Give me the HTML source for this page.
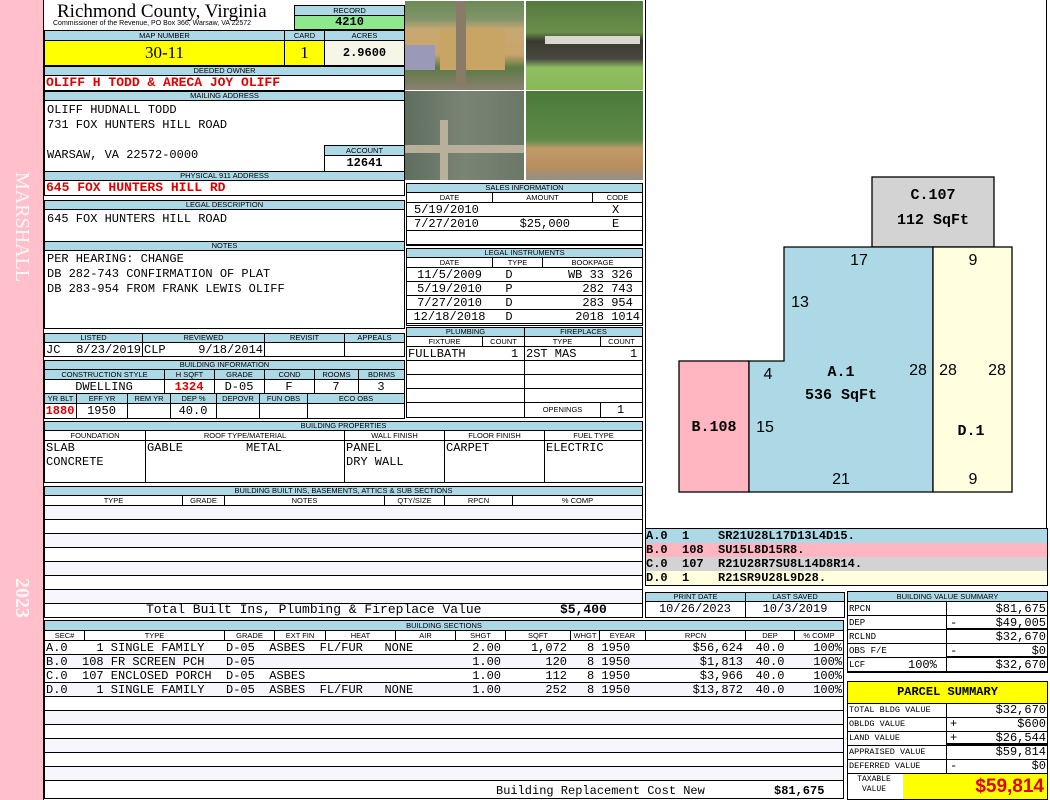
<!DOCTYPE html>
<html><head><meta charset="utf-8">
<style>
*{margin:0;padding:0;box-sizing:border-box}
body{width:1050px;height:800px;position:relative;background:#fff;overflow:hidden;font-family:"Liberation Mono",monospace;color:#000}
.a{position:absolute}
.h{position:absolute;background:#add8e6;border:1px solid #000;font:7.5px/8px "Liberation Sans",sans-serif;text-align:center;white-space:nowrap;overflow:hidden}
.bx{position:absolute;border:1px solid #000;background:#fff}
.t{position:absolute;font:12px/14px "Liberation Mono",monospace;white-space:pre}
.r{text-align:right}
.c{text-align:center}
.red{color:#e00000;font-weight:bold}
.vl{position:absolute;width:1px;background:#000}
.hl{position:absolute;height:1px;background:#000}
.rows{background:repeating-linear-gradient(#f6f6fc 0 13px,#000 13px 14px,#fff 14px 27px,#000 27px 28px)}
</style></head><body>
<!-- left strip -->
<div class="a" style="left:0;top:0;width:43px;height:800px;background:#ffc0cb"></div>
<div class="a" style="left:8px;top:172px;width:28px;height:160px;writing-mode:vertical-rl;font:20px/28px 'Liberation Serif',serif;color:#fff5f7">MARSHALL</div>
<div class="a" style="left:8px;top:578px;width:28px;height:60px;writing-mode:vertical-rl;font:bold 20px/28px 'Liberation Serif',serif;color:#fff5f7">2023</div>
<div class="vl" style="left:43px;top:0;height:800px"></div>

<!-- header -->
<div class="a" style="left:57px;top:1px;font:19px/21px 'Liberation Serif',serif">Richmond County, Virginia</div>
<div class="a" style="left:53px;top:20px;font:7px/8px 'Liberation Sans',sans-serif">Commissioner of the Revenue, PO Box 366, Warsaw, VA 22572</div>
<div class="h" style="left:294px;top:5px;width:111px;height:11px;line-height:9px">RECORD</div>
<div class="a" style="left:294px;top:15px;width:111px;height:15px;background:#8ee88e;border:1px solid #000;font:bold 12px/13px 'Liberation Mono';text-align:center">4210</div>
<div class="h" style="left:44px;top:30px;width:241px;height:11px;line-height:9px">MAP NUMBER</div>
<div class="h" style="left:284px;top:30px;width:41px;height:11px;line-height:9px">CARD</div>
<div class="h" style="left:324px;top:30px;width:81px;height:11px;line-height:9px">ACRES</div>
<div class="a" style="left:44px;top:40px;width:241px;height:26px;background:#ffff00;border:1px solid #000;font:17px/24px 'Liberation Serif',serif;text-align:center">30-11</div>
<div class="a" style="left:284px;top:40px;width:41px;height:26px;background:#ffff00;border:1px solid #000;font:17px/24px 'Liberation Serif',serif;text-align:center">1</div>
<div class="a" style="left:324px;top:40px;width:81px;height:26px;background:#f6f6e8;border:1px solid #000;font:bold 12px/24px 'Liberation Mono';text-align:center">2.9600</div>
<div class="h" style="left:44px;top:66px;width:361px;height:10px">DEEDED OWNER</div>
<div class="bx" style="left:44px;top:75px;width:361px;height:16px"></div>
<div class="t red" style="left:46px;top:76px;font-size:13px">OLIFF H TODD &amp; ARECA JOY OLIFF</div>
<div class="h" style="left:44px;top:91px;width:361px;height:10px">MAILING ADDRESS</div>
<div class="bx" style="left:44px;top:100px;width:361px;height:72px"></div>
<div class="t" style="left:47px;top:103px;line-height:15px">OLIFF HUDNALL TODD
731 FOX HUNTERS HILL ROAD

WARSAW, VA 22572-0000</div>
<div class="h" style="left:324px;top:145px;width:81px;height:11px;line-height:9px">ACCOUNT</div>
<div class="bx" style="left:324px;top:155px;width:81px;height:17px"></div>
<div class="t" style="left:324px;top:156px;width:81px;font-weight:bold;text-align:center">12641</div>
<div class="h" style="left:44px;top:171px;width:361px;height:10px">PHYSICAL 911 ADDRESS</div>
<div class="bx" style="left:44px;top:180px;width:361px;height:16px"></div>
<div class="t red" style="left:46px;top:181px;font-size:13px">645 FOX HUNTERS HILL RD</div>

<div class="h" style="left:44px;top:200px;width:361px;height:10px">LEGAL DESCRIPTION</div>
<div class="bx" style="left:44px;top:209px;width:361px;height:33px"></div>
<div class="t" style="left:47px;top:212px">645 FOX HUNTERS HILL ROAD</div>
<div class="h" style="left:44px;top:241px;width:361px;height:10px">NOTES</div>
<div class="bx" style="left:44px;top:250px;width:361px;height:79px"></div>
<div class="t" style="left:47px;top:252px;line-height:15px">PER HEARING: CHANGE
DB 282-743 CONFIRMATION OF PLAT
DB 283-954 FROM FRANK LEWIS OLIFF</div>

<!-- listed -->
<div class="h" style="left:44px;top:333px;width:99px;height:10px">LISTED</div>
<div class="h" style="left:142px;top:333px;width:123px;height:10px">REVIEWED</div>
<div class="h" style="left:264px;top:333px;width:81px;height:10px">REVISIT</div>
<div class="h" style="left:344px;top:333px;width:61px;height:10px">APPEALS</div>
<div class="bx" style="left:44px;top:342px;width:361px;height:15px"></div>
<div class="vl" style="left:142px;top:342px;height:15px"></div><div class="vl" style="left:264px;top:342px;height:15px"></div><div class="vl" style="left:344px;top:342px;height:15px"></div>
<div class="t" style="left:46px;top:343px">JC</div>
<div class="t r" style="left:60px;top:343px;width:81px">8/23/2019</div>
<div class="t" style="left:144px;top:343px">CLP</div>
<div class="t r" style="left:180px;top:343px;width:83px">9/18/2014</div>

<!-- building information -->
<div class="h" style="left:44px;top:360px;width:361px;height:10px">BUILDING INFORMATION</div>
<div class="bx" style="left:44px;top:369px;width:361px;height:50px"></div>
<div class="h" style="left:44px;top:369px;width:121px;height:11px;line-height:9px">CONSTRUCTION STYLE</div>
<div class="h" style="left:164px;top:369px;width:51px;height:11px;line-height:9px">H SQFT</div>
<div class="h" style="left:214px;top:369px;width:51px;height:11px;line-height:9px">GRADE</div>
<div class="h" style="left:264px;top:369px;width:51px;height:11px;line-height:9px">COND</div>
<div class="h" style="left:314px;top:369px;width:45px;height:11px;line-height:9px">ROOMS</div>
<div class="h" style="left:358px;top:369px;width:47px;height:11px;line-height:9px">BDRMS</div>
<div class="vl" style="left:164px;top:380px;height:14px"></div><div class="vl" style="left:214px;top:380px;height:14px"></div><div class="vl" style="left:264px;top:380px;height:14px"></div><div class="vl" style="left:314px;top:380px;height:14px"></div><div class="vl" style="left:358px;top:380px;height:14px"></div>
<div class="t c" style="left:44px;top:380px;width:120px">DWELLING</div>
<div class="t c red" style="left:164px;top:380px;width:50px">1324</div>
<div class="t c" style="left:214px;top:380px;width:50px">D-05</div>
<div class="t c" style="left:264px;top:380px;width:50px">F</div>
<div class="t c" style="left:314px;top:380px;width:44px">7</div>
<div class="t c" style="left:358px;top:380px;width:46px">3</div>
<div class="h" style="left:44px;top:393px;width:33px;height:11px;line-height:9px">YR BLT</div>
<div class="h" style="left:76px;top:393px;width:52px;height:11px;line-height:9px">EFF YR</div>
<div class="h" style="left:127px;top:393px;width:44px;height:11px;line-height:9px">REM YR</div>
<div class="h" style="left:170px;top:393px;width:47px;height:11px;line-height:9px">DEP %</div>
<div class="h" style="left:216px;top:393px;width:44px;height:11px;line-height:9px">DEPOVR</div>
<div class="h" style="left:259px;top:393px;width:49px;height:11px;line-height:9px">FUN OBS</div>
<div class="h" style="left:307px;top:393px;width:98px;height:11px;line-height:9px">ECO OBS</div>
<div class="vl" style="left:76px;top:404px;height:14px"></div><div class="vl" style="left:127px;top:404px;height:14px"></div><div class="vl" style="left:170px;top:404px;height:14px"></div><div class="vl" style="left:216px;top:404px;height:14px"></div><div class="vl" style="left:259px;top:404px;height:14px"></div><div class="vl" style="left:307px;top:404px;height:14px"></div>
<div class="t c red" style="left:44px;top:404px;width:32px">1880</div>
<div class="t c" style="left:76px;top:404px;width:51px">1950</div>
<div class="t c" style="left:170px;top:404px;width:46px">40.0</div>

<!-- photos -->
<div class="a" style="left:405px;top:1px;width:119px;height:89px;background:linear-gradient(180deg,#6b8a55 0,#7f9468 20%,#c7a872 32%,#c9a46a 60%,#5d7a45 75%,#8a8070 100%)"></div>
<div class="a" style="left:440px;top:28px;width:65px;height:42px;background:#c8a465"></div>
<div class="a" style="left:405px;top:45px;width:30px;height:25px;background:#9a9ab8"></div>
<div class="a" style="left:456px;top:1px;width:10px;height:85px;background:#8a7a68"></div>
<div class="a" style="left:526px;top:1px;width:117px;height:89px;background:linear-gradient(180deg,#557a40 0,#6a8f4a 35%,#3a3a30 45%,#484840 65%,#8fbf60 75%,#88b858 100%)"></div>
<div class="a" style="left:545px;top:36px;width:95px;height:8px;background:#d8d8d0"></div>
<div class="a" style="left:405px;top:91px;width:119px;height:89px;background:linear-gradient(90deg,#5e6e5e,#7a8474 50%,#6a7868)"></div>
<div class="a" style="left:405px;top:145px;width:119px;height:8px;background:#b8b09a"></div>
<div class="a" style="left:440px;top:120px;width:8px;height:60px;background:#b8b09a"></div>
<div class="a" style="left:526px;top:91px;width:117px;height:89px;background:linear-gradient(180deg,#4a7a3a 0,#5e8a48 55%,#c09a6a 65%,#b88e60 85%,#909088 100%)"></div>

<!-- sales -->
<div class="h" style="left:406px;top:183px;width:237px;height:10px">SALES INFORMATION</div>
<div class="bx" style="left:406px;top:192px;width:237px;height:54px"></div>
<div class="h" style="left:406px;top:192px;width:87px;height:11px;line-height:9px;background:#fff">DATE</div>
<div class="h" style="left:492px;top:192px;width:101px;height:11px;line-height:9px;background:#fff">AMOUNT</div>
<div class="h" style="left:592px;top:192px;width:51px;height:11px;line-height:9px;background:#fff">CODE</div>
<div class="a" style="left:407px;top:203px;width:235px;height:42px;background:repeating-linear-gradient(#fff 0 13px,#000 13px 14px)"></div>
<div class="t" style="left:414px;top:203px">5/19/2010</div><div class="t" style="left:612px;top:203px">X</div>
<div class="t" style="left:414px;top:217px">7/27/2010</div><div class="t r" style="left:492px;top:217px;width:78px">$25,000</div><div class="t" style="left:612px;top:217px">E</div>

<div class="h" style="left:406px;top:248px;width:237px;height:10px">LEGAL INSTRUMENTS</div>
<div class="bx" style="left:406px;top:257px;width:237px;height:69px"></div>
<div class="h" style="left:406px;top:257px;width:87px;height:11px;line-height:9px;background:#fff">DATE</div>
<div class="h" style="left:492px;top:257px;width:51px;height:11px;line-height:9px;background:#fff">TYPE</div>
<div class="h" style="left:542px;top:257px;width:101px;height:11px;line-height:9px;background:#fff">BOOKPAGE</div>
<div class="a" style="left:407px;top:268px;width:235px;height:57px;background:repeating-linear-gradient(#fff 0 13px,#000 13px 14px)"></div>
<div class="t c" style="left:406px;top:268px;width:87px;line-height:14px">11/5/2009
5/19/2010
7/27/2010
12/18/2018</div>
<div class="t c" style="left:492px;top:268px;width:34px;line-height:14px">D
P
D
D</div>
<div class="t r" style="left:530px;top:268px;width:110px;line-height:14px">WB 33 326 
282 743 
283 954 
2018 1014</div>

<!-- plumbing -->
<div class="h" style="left:406px;top:327px;width:119px;height:10px">PLUMBING</div>
<div class="h" style="left:524px;top:327px;width:119px;height:10px">FIREPLACES</div>
<div class="bx" style="left:406px;top:336px;width:237px;height:82px"></div>
<div class="h" style="left:406px;top:336px;width:77px;height:11px;line-height:9px;background:#fff">FIXTURE</div>
<div class="h" style="left:482px;top:336px;width:43px;height:11px;line-height:9px;background:#fff">COUNT</div>
<div class="h" style="left:524px;top:336px;width:77px;height:11px;line-height:9px;background:#fff">TYPE</div>
<div class="h" style="left:600px;top:336px;width:43px;height:11px;line-height:9px;background:#fff">COUNT</div>
<div class="a" style="left:407px;top:347px;width:235px;height:56px;background:repeating-linear-gradient(#fff 0 13px,#000 13px 14px)"></div>
<div class="vl" style="left:524px;top:347px;height:71px"></div>
<div class="t" style="left:408px;top:347px">FULLBATH</div><div class="t" style="left:511px;top:347px">1</div>
<div class="t" style="left:526px;top:347px">2ST MAS</div><div class="t" style="left:630px;top:347px">1</div>
<div class="a" style="left:525px;top:403px;width:117px;height:14px;background:#fff"></div>
<div class="vl" style="left:600px;top:403px;height:15px"></div>
<div class="a" style="left:525px;top:405px;width:75px;font:7.5px/10px 'Liberation Sans';text-align:center">OPENINGS</div>
<div class="t" style="left:617px;top:403px">1</div>

<!-- building properties -->
<div class="h" style="left:44px;top:421px;width:599px;height:10px">BUILDING PROPERTIES</div>
<div class="bx" style="left:44px;top:430px;width:599px;height:53px"></div>
<div class="h" style="left:44px;top:430px;width:102px;height:11px;line-height:9px;background:#fff">FOUNDATION</div>
<div class="h" style="left:145px;top:430px;width:200px;height:11px;line-height:9px;background:#fff">ROOF TYPE/MATERIAL</div>
<div class="h" style="left:344px;top:430px;width:101px;height:11px;line-height:9px;background:#fff">WALL FINISH</div>
<div class="h" style="left:444px;top:430px;width:101px;height:11px;line-height:9px;background:#fff">FLOOR FINISH</div>
<div class="h" style="left:544px;top:430px;width:99px;height:11px;line-height:9px;background:#fff">FUEL TYPE</div>
<div class="vl" style="left:145px;top:441px;height:42px"></div><div class="vl" style="left:344px;top:441px;height:42px"></div><div class="vl" style="left:444px;top:441px;height:42px"></div><div class="vl" style="left:544px;top:441px;height:42px"></div>
<div class="t" style="left:46px;top:441px">SLAB
CONCRETE</div>
<div class="t" style="left:147px;top:441px">GABLE</div><div class="t" style="left:246px;top:441px">METAL</div>
<div class="t" style="left:346px;top:441px">PANEL
DRY WALL</div>
<div class="t" style="left:446px;top:441px">CARPET</div>
<div class="t" style="left:546px;top:441px">ELECTRIC</div>

<!-- built ins -->
<div class="h" style="left:44px;top:486px;width:599px;height:10px">BUILDING BUILT INS, BASEMENTS, ATTICS &amp; SUB SECTIONS</div>
<div class="bx" style="left:44px;top:495px;width:599px;height:123px"></div>
<div class="h" style="left:44px;top:495px;width:139px;height:11px;line-height:9px;background:#fff">TYPE</div>
<div class="h" style="left:182px;top:495px;width:43px;height:11px;line-height:9px;background:#fff">GRADE</div>
<div class="h" style="left:224px;top:495px;width:161px;height:11px;line-height:9px;background:#fff">NOTES</div>
<div class="h" style="left:384px;top:495px;width:61px;height:11px;line-height:9px;background:#fff">QTY/SIZE</div>
<div class="h" style="left:444px;top:495px;width:69px;height:11px;line-height:9px;background:#fff">RPCN</div>
<div class="h" style="left:512px;top:495px;width:131px;height:11px;line-height:9px;background:#fff">% COMP</div>
<div class="a rows" style="left:45px;top:506px;width:597px;height:98px"></div>
<div class="t" style="left:146px;top:603px;font-size:13px">Total Built Ins, Plumbing &amp; Fireplace Value</div>
<div class="t" style="left:560px;top:603px;font-weight:bold;font-size:13px">$5,400</div>

<!-- building sections -->
<div class="h" style="left:44px;top:620px;width:800px;height:11px;line-height:9px">BUILDING SECTIONS</div>
<div class="bx" style="left:44px;top:630px;width:800px;height:169px"></div>
<div class="h" style="left:44px;top:630px;width:41px;height:11px;line-height:9px;background:#fff">SEC#</div>
<div class="h" style="left:84px;top:630px;width:141px;height:11px;line-height:9px;background:#fff">TYPE</div>
<div class="h" style="left:224px;top:630px;width:51px;height:11px;line-height:9px;background:#fff">GRADE</div>
<div class="h" style="left:274px;top:630px;width:52px;height:11px;line-height:9px;background:#fff">EXT FIN</div>
<div class="h" style="left:325px;top:630px;width:71px;height:11px;line-height:9px;background:#fff">HEAT</div>
<div class="h" style="left:395px;top:630px;width:61px;height:11px;line-height:9px;background:#fff">AIR</div>
<div class="h" style="left:455px;top:630px;width:51px;height:11px;line-height:9px;background:#fff">SHGT</div>
<div class="h" style="left:505px;top:630px;width:66px;height:11px;line-height:9px;background:#fff">SQFT</div>
<div class="h" style="left:570px;top:630px;width:30px;height:11px;line-height:9px;background:#fff">WHGT</div>
<div class="h" style="left:599px;top:630px;width:47px;height:11px;line-height:9px;background:#fff">EYEAR</div>
<div class="h" style="left:645px;top:630px;width:101px;height:11px;line-height:9px;background:#fff">RPCN</div>
<div class="h" style="left:745px;top:630px;width:50px;height:11px;line-height:9px;background:#fff">DEP</div>
<div class="h" style="left:794px;top:630px;width:50px;height:11px;line-height:9px;background:#fff">% COMP</div>
<div class="a" style="left:45px;top:641px;width:798px;height:140px;background:repeating-linear-gradient(#fff 0 13px,#000 13px 14px,#f6f6fc 14px 27px,#000 27px 28px)"></div>
<div class="t" style="left:46px;top:641px;line-height:14px">A.0    1 SINGLE FAMILY   D-05  ASBES  FL/FUR   NONE
B.0  108 FR SCREEN PCH   D-05
C.0  107 ENCLOSED PORCH  D-05  ASBES
D.0    1 SINGLE FAMILY   D-05  ASBES  FL/FUR   NONE</div>
<div class="t r" style="left:455px;top:641px;width:46px;line-height:14px">2.00
1.00
1.00
1.00</div>
<div class="t r" style="left:505px;top:641px;width:62px;line-height:14px">1,072
120
112
252</div>
<div class="t" style="left:587px;top:641px;line-height:14px">8 1950
8 1950
8 1950
8 1950</div>
<div class="t r" style="left:645px;top:641px;width:98px;line-height:14px">$56,624
$1,813
$3,966
$13,872</div>
<div class="t c" style="left:745px;top:641px;width:50px;line-height:14px">40.0
40.0
40.0
40.0</div>
<div class="t r" style="left:794px;top:641px;width:48px;line-height:14px">100%
100%
100%
100%</div>
<div class="t" style="left:496px;top:784px;font-size:12px">Building Replacement Cost New</div>
<div class="t" style="left:774px;top:784px;font-weight:bold;font-size:12px">$81,675</div>

<!-- sketch area -->
<div class="a" style="left:645px;top:0;width:1px;height:528px;background:#000"></div>
<div class="a" style="left:1046px;top:0;width:1px;height:528px;background:#000"></div>
<svg class="a" style="left:0;top:0" width="1050" height="528">
<rect x="872" y="177" width="122" height="70" fill="#d3d3d3" stroke="#000" stroke-width="1.3"/>
<rect x="679" y="361" width="70" height="131" fill="#ffb6c1" stroke="#000" stroke-width="1.3"/>
<polygon points="784,247 933,247 933,492 749,492 749,361 784,361" fill="#add8e6" stroke="#000" stroke-width="1.3"/>
<rect x="933" y="247" width="79" height="245" fill="#ffffe0" stroke="#000" stroke-width="1.3"/>
<g font-family="Liberation Mono" font-weight="bold" font-size="15" text-anchor="middle">
<text x="933" y="199">C.107</text><text x="933" y="224">112 SqFt</text>
<text x="841" y="376">A.1</text><text x="841" y="399">536 SqFt</text>
<text x="714" y="431">B.108</text><text x="971" y="435">D.1</text>
</g>
<g font-family="Liberation Sans" font-size="16" text-anchor="middle">
<text x="859" y="265">17</text><text x="800" y="307">13</text><text x="768" y="379">4</text>
<text x="918" y="375">28</text><text x="948" y="375">28</text><text x="997" y="375">28</text>
<text x="973" y="265">9</text><text x="973" y="484">9</text><text x="841" y="484">21</text>
<text x="765" y="432">15</text>
</g>
</svg>
<div class="a" style="left:645px;top:528px;width:403px;height:58px;border:1px solid #000"></div>
<div class="a" style="left:646px;top:529px;width:401px;height:14px;background:#add8e6"></div>
<div class="a" style="left:646px;top:543px;width:401px;height:14px;background:#ffb6c1"></div>
<div class="a" style="left:646px;top:557px;width:401px;height:14px;background:#d3d3d3"></div>
<div class="a" style="left:646px;top:571px;width:401px;height:14px;background:#ffffe0"></div>
<div class="t" style="left:646px;top:529px;font-weight:bold;line-height:14px;font-size:12px">A.0  1    SR21U28L17D13L4D15.
B.0  108  SU15L8D15R8.
C.0  107  R21U28R7SU8L14D8R14.
D.0  1    R21SR9U28L9D28.</div>

<!-- print date -->
<div class="h" style="left:645px;top:592px;width:101px;height:10px">PRINT DATE</div>
<div class="h" style="left:745px;top:592px;width:100px;height:10px">LAST SAVED</div>
<div class="bx" style="left:645px;top:601px;width:200px;height:17px"></div>
<div class="vl" style="left:745px;top:601px;height:17px"></div>
<div class="t c" style="left:645px;top:602px;width:100px">10/26/2023</div>
<div class="t c" style="left:745px;top:602px;width:100px">10/3/2019</div>

<!-- building value summary -->
<div class="h" style="left:847px;top:591px;width:201px;height:11px;line-height:9px">BUILDING VALUE SUMMARY</div>
<div class="bx" style="left:847px;top:601px;width:201px;height:72px;background:repeating-linear-gradient(#fff 0 13px,#000 13px 14px)"></div>
<div class="vl" style="left:946px;top:601px;height:72px"></div>
<div class="a" style="left:946px;top:628px;width:102px;height:2px;background:#000"></div>
<div class="a" style="left:946px;top:656px;width:102px;height:2px;background:#000"></div>
<div class="a" style="left:849px;top:602px;font:9px/14px 'Liberation Mono';white-space:pre">RPCN
DEP
RCLND
OBS F/E
LCF</div>
<div class="t" style="left:908px;top:658px">100%</div>
<div class="t r" style="left:947px;top:602px;width:99px;line-height:14px">$81,675
$49,005
$32,670
$0
$32,670</div>
<div class="t" style="left:950px;top:616px">-</div><div class="t" style="left:950px;top:644px">-</div>

<!-- parcel summary -->
<div class="a" style="left:847px;top:681px;width:201px;height:23px;background:#ffff00;border:1px solid #000;font:bold 12px/21px 'Liberation Mono';text-align:center">PARCEL SUMMARY</div>
<div class="bx" style="left:847px;top:703px;width:201px;height:71px;background:repeating-linear-gradient(#fff 0 13px,#000 13px 14px)"></div>
<div class="vl" style="left:946px;top:703px;height:71px"></div>
<div class="a" style="left:946px;top:743px;width:102px;height:2px;background:#000"></div>
<div class="a" style="left:849px;top:703px;font:8.5px/14px 'Liberation Mono';white-space:pre">TOTAL BLDG VALUE
OBLDG VALUE
LAND VALUE
APPRAISED VALUE
DEFERRED VALUE</div>
<div class="t r" style="left:947px;top:703px;width:99px;line-height:14px">$32,670
$600
$26,544
$59,814
$0</div>
<div class="t" style="left:950px;top:717px;line-height:14px">+
+

-</div>
<div class="bx" style="left:847px;top:773px;width:201px;height:27px"></div>
<div class="a" style="left:849px;top:775px;width:50px;font:8px/10px 'Liberation Mono';text-align:center">TAXABLE<br>VALUE</div>
<div class="a" style="left:903px;top:774px;width:144px;height:25px;background:#ffff00;font:bold 19px/25px 'Liberation Sans';color:#e00000;text-align:right;padding-right:3px">$59,814</div>
</body></html>
